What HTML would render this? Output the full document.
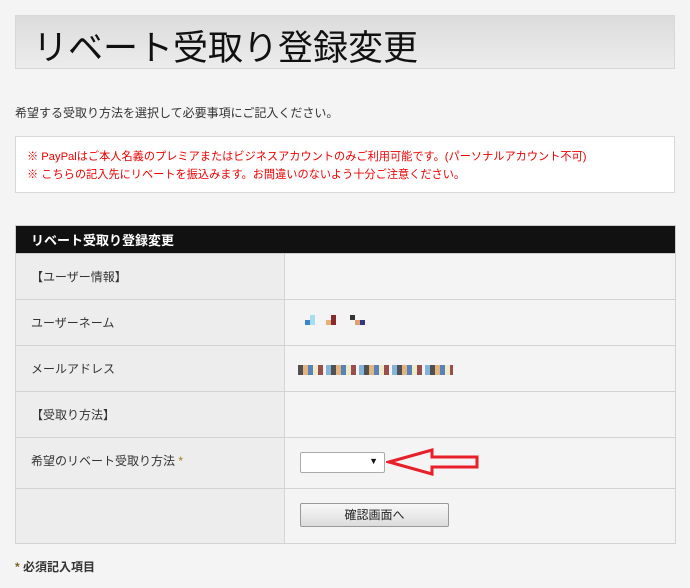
<!DOCTYPE html>
<html><head><meta charset="utf-8"><style>
body{margin:0;width:690px;height:588px;background:#f4f4f4;font-family:"Liberation Sans","Noto Sans CJK JP",sans-serif;position:relative;overflow:hidden;color:#333}
.a{position:absolute}
.title{left:15px;top:15px;width:658px;height:52px;border:1px solid #d8d8d8;background:linear-gradient(#dcdcdc,#ececec);}
.title span{position:absolute;left:17px;top:4px;font-size:35px;color:#111;white-space:nowrap}
.intro{left:15px;top:104px;font-size:12px;color:#333}
.red{left:15px;top:136px;width:658px;height:55px;border:1px solid #d8d8d8;background:#fff;color:#e00;font-size:11.2px;line-height:18px}
.red div{position:absolute;left:11px;top:11px;white-space:nowrap}
table{position:absolute;left:15px;top:225px;width:661px;border-collapse:collapse;font-size:12px}
th{background:#111;color:#fff;text-align:left;height:27px;padding:0 0 0 15px;font-size:13px;font-weight:bold;border:1px solid #ccc}
td{border:1px solid #d4d4d4;padding:0 0 0 15px;vertical-align:middle}
td.l{width:253px;background:#ededed}
td.r{background:#f4f4f4}
</style></head><body>
<div class="a title"><span>リベート受取り登録変更</span></div>
<div class="a intro">希望する受取り方法を選択して必要事項にご記入ください。</div>
<div class="a red"><div>※ PayPalはご本人名義のプレミアまたはビジネスアカウントのみご利用可能です。(パーソナルアカウント不可)<br>※ こちらの記入先にリベートを振込みます。お間違いのないよう十分ご注意ください。</div></div>
<table>
<tr><th colspan="2">リベート受取り登録変更</th></tr>
<tr style="height:46px"><td class="l">【ユーザー情報】</td><td class="r"></td></tr>
<tr style="height:46px"><td class="l">ユーザーネーム</td><td class="r"></td></tr>
<tr style="height:46px"><td class="l">メールアドレス</td><td class="r"></td></tr>
<tr style="height:46px"><td class="l">【受取り方法】</td><td class="r"></td></tr>
<tr style="height:51px"><td class="l" style="padding-bottom:6px">希望のリベート受取り方法 <span style="color:#a08020">*</span></td><td class="r"></td></tr>
<tr style="height:55px"><td class="l"></td><td class="r"></td></tr>
</table>
<div class="a" style="left:305px;top:315px;width:65px;height:12px">
<div class="a" style="left:0;top:5px;width:5px;height:5px;background:#3a86c8"></div>
<div class="a" style="left:5px;top:0;width:5px;height:10px;background:#a8dcf0"></div>
<div class="a" style="left:21px;top:5px;width:5px;height:5px;background:#e8b078"></div>
<div class="a" style="left:26px;top:0;width:5px;height:10px;background:#8a2a2a"></div>
<div class="a" style="left:45px;top:0;width:5px;height:5px;background:#333"></div>
<div class="a" style="left:50px;top:5px;width:5px;height:5px;background:#e0a070"></div>
<div class="a" style="left:55px;top:5px;width:5px;height:5px;background:#333880"></div>
</div>
<div class="a" style="left:298px;top:365px;width:155px;height:10px;background:repeating-linear-gradient(90deg,#333 0 5px,#e0a868 5px 10px,#3a70b0 10px 15px,#f0e8c0 15px 20px,#8a3030 20px 25px,#f4f4f4 25px 28px,#70a8d8 28px 33px);opacity:.85"></div>
<div class="a" style="left:300px;top:452px;width:83px;height:19px;border:1px solid #aaa;background:#fff;border-radius:2px"><span style="position:absolute;right:6px;top:3px;font-size:9px;color:#111">▼</span></div>
<svg class="a" style="left:386px;top:447px" width="96" height="30"><path d="M3 15 L46 3 L46 10 L91 10 L91 20 L46 20 L46 27 Z" fill="none" stroke="#e8202a" stroke-width="3" stroke-linejoin="miter"/></svg>
<div class="a" style="left:300px;top:503px;width:147px;height:22px;border:1px solid #999;border-radius:2px;background:linear-gradient(#f8f8f8,#dcdcdc);font-size:12px;text-align:center;line-height:22px;color:#222">確認画面へ</div>
<div class="a" style="left:15px;top:558px;font-size:12px;font-weight:bold;color:#333"><span style="color:#806020">*</span> 必須記入項目</div>
</body></html>
